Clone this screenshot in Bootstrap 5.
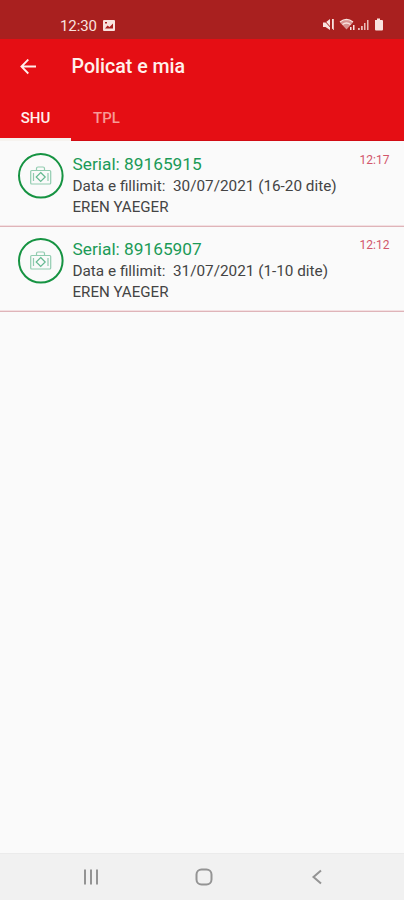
<!DOCTYPE html>
<html lang="sq">
<head>
<meta charset="utf-8">
<meta name="viewport" content="width=device-width, initial-scale=1">
<title>Policat e mia</title>
<link href="https://cdn.jsdelivr.net/npm/bootstrap@5.3.0/dist/css/bootstrap.min.css" rel="stylesheet">
<style>
body{font-family:Roboto,sans-serif;background:#fafafa;height:900px;line-height:1.2;overflow:hidden}
svg{display:block;flex:none}
.status{height:39px;background:#a9201f;color:#f9e3df;padding:13px 20px 0 60px;font-size:15px}
.status .clock{letter-spacing:-.1px;line-height:26px}
.picture-icon{margin:7px 0 0 5px}
.appbar{background:#e50e14;color:#fff0ec;height:102px;border-bottom:1px solid #d10c14}
.titlebar{height:55px;padding-left:20px;gap:34.500px}
.titlebar h1{font-size:19.600px;font-weight:500;line-height:24px}
.tabs{height:46px}
.tabs .nav-link{font-size:15px;font-weight:500;color:#f79a96;line-height:46px;padding:1px 0 0;width:71px;height:47px;text-align:center}
.tabs .nav-link.active{color:#fff0ec;border-bottom:3px solid #f6f3ef}
.policies{padding-top:1px}
.policy{height:85px;border-bottom:1px solid #dfb4b9;box-shadow:inset 0 -1px #f3e0e2;padding:10px 14.500px 0 17px}
.badge-ring{width:47px;height:47px;margin-right:8.500px}
.serial{font-size:17.3px;color:#1c9a57;line-height:24px}
.line{font-size:15.3px;color:#444;line-height:21px;white-space:pre}
.holder{font-size:15.1px}
.stamp{font-size:12px;color:#d2566b;line-height:17px}
.sysnav{height:47px;background:#f1f1f1;border-top:1px solid #ebebeb}
</style>
</head>
<body class="d-flex flex-column">
<div class="status d-flex align-items-start">
  <span class="clock">12:30</span>
  <svg class="picture-icon" width="14" height="11" viewBox="0 0 14 11"><rect x="1" y="0" width="12" height="11" rx="1" fill="#f9e3df"/><path d="M3 8.500l2.500-3 2 1.600 3.500-3.500v5z" fill="#a9201f"/><rect x="3" y="2" width="2" height="1.500" fill="#a9201f"/></svg>
  <svg class="ms-auto mt-1" width="62" height="16" viewBox="0 0 62 16">
    <g fill="#f9e3df">
      <path d="M1 5.500h2.500L8 2v11L3.500 10H1z"/><path d="M10 2h1.800v11H10z"/>
      <path d="M18 5.500q6.500-5 13 0l-6.500 7z" opacity=".6"/>
      <path d="M28 13v-3h1.500v3zM31 13V8h1.500v5z"/>
      <path d="M36 11h1.800v2H36zM39 9h1.800v4H39zM42 6h1.500v7H42zM45 3h1.500v10H45z" opacity=".8"/>
      <path d="M53 3h2V1.500h3V3h2q1 0 1 1v8.500q0 1-1 1h-6q-1 0-1-1z"/>
    </g>
    <path d="M1 2l10 11" stroke="#a9201f" stroke-width="1"/>
    <path d="M18 5q6.500-5 13 0M20.500 7.500q4-3 8 0" fill="none" stroke="#f9e3df" stroke-width="1.400"/>
  </svg>
</div>
<header class="appbar">
  <div class="titlebar d-flex align-items-center">
    <svg width="17" height="16" viewBox="0 0 17 16" fill="none" stroke="#fff0ec" stroke-width="1.800"><path d="M16 7.500H1.500M8.300 .5L1.400 7.500l6.900 7"/></svg>
    <h1 class="mb-0">Policat e mia</h1>
  </div>
  <nav class="nav tabs">
    <a class="nav-link active" href="#">SHU</a>
    <a class="nav-link" href="#">TPL</a>
  </nav>
</header>
<main class="policies flex-grow-1">
  <article class="policy d-flex align-items-start">
    <svg class="badge-ring" viewBox="0 0 47 47" fill="none"><circle cx="23.800" cy="23.800" r="21.800" stroke="#169342" stroke-width="2"/><g stroke="#91ccb0" stroke-width="1.200"><rect x="13.700" y="18.500" width="20" height="13.500" rx="1"/><path d="M19.500 18.500v-2q0-1.500 1.500-1.500h5q1.500 0 1.500 1.500v2M16.500 21v8M31 21v8"/><path d="M23.700 20.500l4.500 4.500-4.500 4.500-4.500-4.500z" stroke="#65b991"/></g></svg>
    <div class="flex-grow-1">
      <div class="serial">Serial: 89165915</div>
      <div class="line">Data e fillimit:  30/07/2021 (16-20 dite)</div>
      <div class="line holder">EREN YAEGER</div>
    </div>
    <time class="stamp">12:17</time>
  </article>
  <article class="policy d-flex align-items-start">
    <svg class="badge-ring" viewBox="0 0 47 47" fill="none"><circle cx="23.800" cy="23.800" r="21.800" stroke="#169342" stroke-width="2"/><g stroke="#91ccb0" stroke-width="1.200"><rect x="13.700" y="18.500" width="20" height="13.500" rx="1"/><path d="M19.500 18.500v-2q0-1.500 1.500-1.500h5q1.500 0 1.500 1.500v2M16.500 21v8M31 21v8"/><path d="M23.700 20.500l4.500 4.500-4.500 4.500-4.500-4.500z" stroke="#65b991"/></g></svg>
    <div class="flex-grow-1">
      <div class="serial">Serial: 89165907</div>
      <div class="line">Data e fillimit:  31/07/2021 (1-10 dite)</div>
      <div class="line holder">EREN YAEGER</div>
    </div>
    <time class="stamp">12:12</time>
  </article>
</main>
<footer class="sysnav d-flex justify-content-center align-items-center">
  <svg width="240" height="18" viewBox="0 0 240 18" fill="none" stroke="#949494" stroke-width="2"><path d="M3 1.500v15M9 1.500v15M15 1.500v15"/><rect x="114.500" y="1.500" width="15" height="15" rx="5"/><path d="M239 2.500l-7.500 6.500 7.500 6.500"/></svg>
</footer>
<script src="https://cdn.jsdelivr.net/npm/bootstrap@5.3.0/dist/js/bootstrap.bundle.min.js"></script>
</body>
</html>
